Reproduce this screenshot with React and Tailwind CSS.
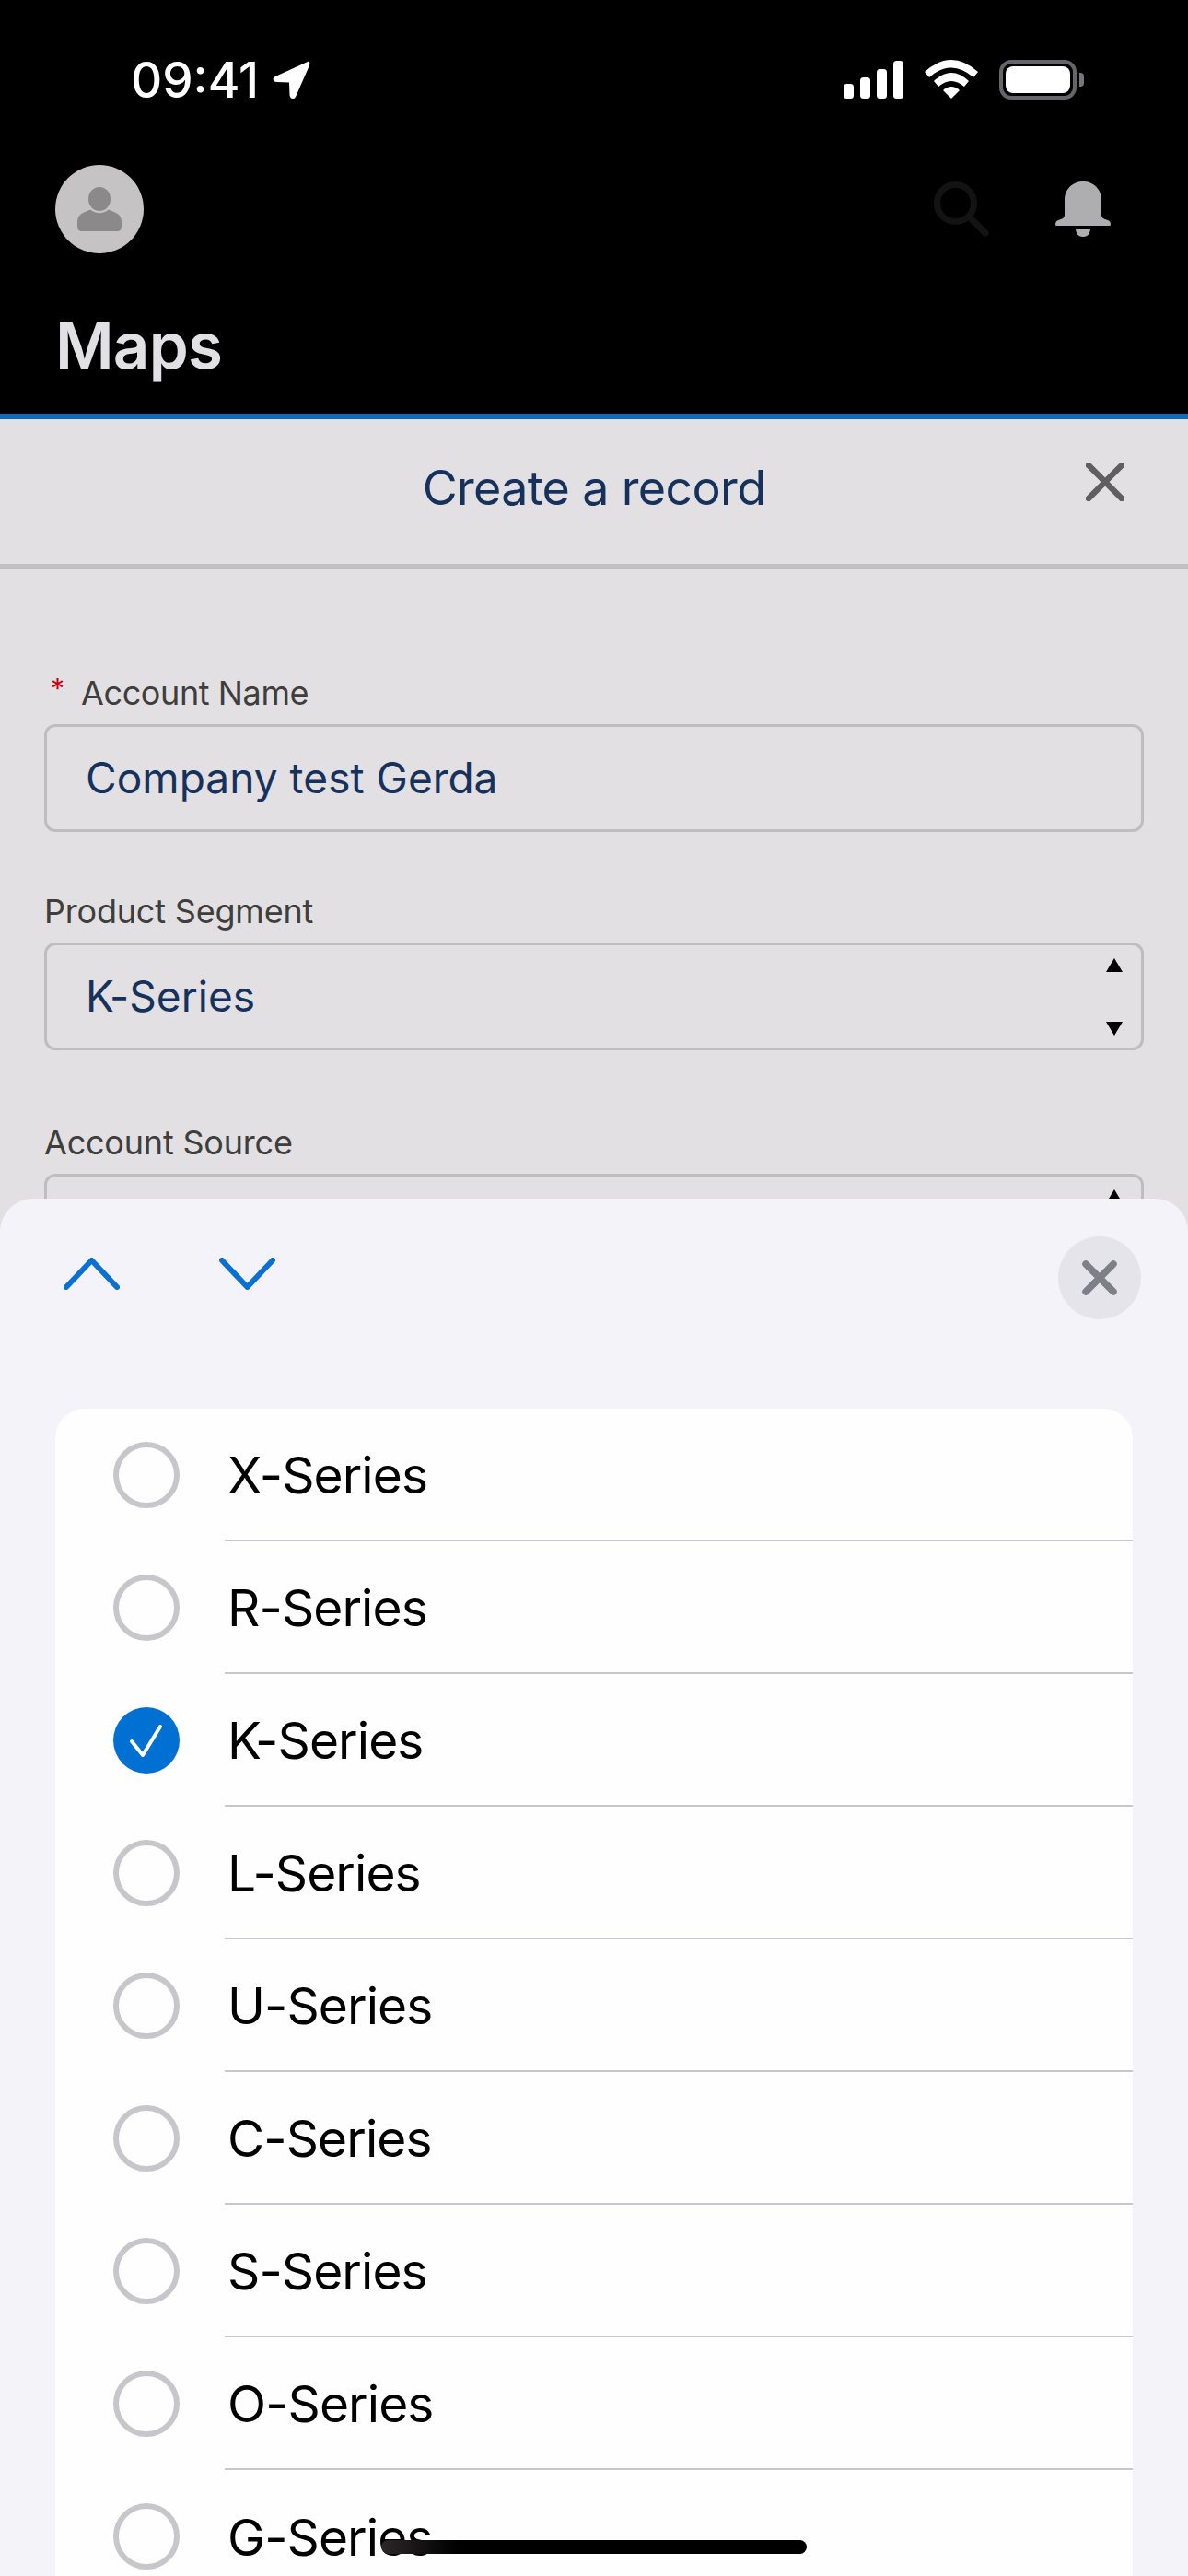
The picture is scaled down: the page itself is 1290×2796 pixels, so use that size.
const series = ['X-Series', 'R-Series', 'K-Series', 'L-Series', 'U-Series', 'C-Series', 'S-Series', 'O-Series', 'G-Series']

/* ─────────────── Status bar ─────────────── */

function StatusBar() {
  return (
    <div className="flex h-[112px] items-start justify-between pl-[142px] pr-[113px] pt-[65px]">
      <div className="flex items-center gap-[14px]">
        <span className="text-[53px] leading-[44px] font-medium tracking-[0px] text-white">09:41</span>
        <svg width="42" height="42" viewBox="0 0 42 42" className="shrink-0">
          <path
            d="M38 1.5 L4 17 Q0 19 2.5 22 Q3.5 23 6 23 L19 23.5 L19.5 37 Q20 41 23 41 Q25.5 41 26.5 38 L41 5 Q42 2 40.5 1 Q39.5 0.5 38 1.5 Z"
            fill="#fff"
          />
        </svg>
      </div>
      <div className="flex items-start">
        <svg width="65" height="41" viewBox="0 0 65 41" className="mt-[1px] shrink-0" fill="#fff">
          <rect x="0" y="25" width="11" height="16" rx="3.5" />
          <rect x="18" y="18" width="11" height="23" rx="3.5" />
          <rect x="36" y="9" width="11" height="32" rx="3.5" />
          <rect x="54" y="0" width="11" height="41" rx="3.5" />
        </svg>
        <svg width="58" height="42" viewBox="0 0 58 42" className="ml-[23px] shrink-0" fill="#fff">
          <path d="M0 13 Q29 -13 58 13 L53 19 Q29 -2 5 19 Z" />
          <path d="M10 23 Q29 5 48 23 L43 29 Q29 17 15 29 Z" />
          <path d="M20 33 Q29 25 38 33 L29 42 Z" />
        </svg>
        <div className="ml-[23px] flex items-center">
          <div className="flex h-[43px] w-[84px] items-center justify-center rounded-[13px] border-[4px] border-[#666567]">
            <div className="h-[29px] w-[70px] rounded-[8px] bg-white" />
          </div>
          <div className="ml-[3px] h-[15px] w-[5px] rounded-r-[4px] bg-[#777678]" />
        </div>
      </div>
    </div>
  )
}

/* ─────────────── App header ─────────────── */

function Header() {
  return (
    <header className="h-[455px] border-b-[6px] border-[#0f6cbd] bg-black">
      <StatusBar />
      <div className="flex h-[96px] items-center justify-between pl-[60px] pr-[84px] mt-[67px]">
        <div className="flex h-[96px] w-[96px] items-center justify-center rounded-full bg-[#c5c3c4]">
          <svg width="48" height="48" viewBox="0 0 48 48" fill="#8b898a">
            <ellipse cx="24" cy="13" rx="12" ry="13" />
            <path d="M14 24.5 Q24 32 34 24.5 L42 28 Q48 31 48 38 L48 43 Q48 48 43 48 L5 48 Q0 48 0 43 L0 38 Q0 31 6 28 Z" />
          </svg>
        </div>
        <div className="flex items-center gap-[72px]">
          <svg width="60" height="60" viewBox="0 0 60 60" fill="none" stroke="#131314" strokeWidth="7">
            <circle cx="23.5" cy="23.5" r="20" />
            <path d="M38 38 L56 56" strokeLinecap="round" />
          </svg>
          <svg width="60" height="60" viewBox="0 0 60 60" fill="#aeaeb0">
            <path d="M30 0 C41 0 50 8 50 20 L50 36 Q50 40 54 41 L57 42 Q60 43 60 47 Q60 48 58 48 L2 48 Q0 48 0 47 Q0 43 3 42 L6 41 Q10 40 10 36 L10 20 C10 8 19 0 30 0 Z" />
            <path d="M22 52 L38 52 Q37 60 30 60 Q23 60 22 52 Z" />
          </svg>
        </div>
      </div>
      <h1 className="mt-[59px] pl-[60px] text-[69px] leading-[82px] font-semibold tracking-[-0.8px] text-[#e1e0e3]">Maps</h1>
    </header>
  )
}

/* ─────────────── Form behind the sheet ─────────────── */

function Field({ label, required, value, select }) {
  return (
    <div>
      <div className="flex h-[46px] items-start">
        {required && <span className="ml-[7px] mr-[18px] text-[30px] leading-[30px] text-[#c4000f]">*</span>}
        <span className={`text-[36px] leading-[40px] text-[#3e3e3c] ${required ? 'tracking-[-0.4px]' : 'tracking-[-0.2px]'}`}>{label}</span>
      </div>
      <div className="mt-[8px] flex h-[117px] items-center justify-between rounded-[12px] border-[3px] border-[#bfbdbf] pl-[42px] pr-[20px]">
        <span className="text-[46px] tracking-[0.05px] text-[#16325c]">{value}</span>
        {select && (
          <div className="flex h-[84px] flex-col items-center justify-between">
            <svg width="18" height="15" viewBox="0 0 18 15"><path d="M9 0 L18 15 L0 15 Z" fill="#000" /></svg>
            <svg width="18" height="15" viewBox="0 0 18 15"><path d="M0 0 L18 0 L9 15 Z" fill="#000" /></svg>
          </div>
        )}
      </div>
    </div>
  )
}

function RecordForm() {
  return (
    <div>
      <div className="grid h-[163px] grid-cols-[1fr_auto_1fr] items-center border-b-[6px] border-[#c2c0c2] pb-[8px]">
        <div />
        <h2 className="text-[52px] leading-[60px] tracking-[-0.65px] text-[#16325c]">Create a record</h2>
        <div className="flex justify-end pb-[14px] pr-[69px]">
          <svg width="42" height="42" viewBox="0 0 42 42" stroke="#605e5f" strokeWidth="6.5" strokeLinecap="round">
            <path d="M3 3 L39 39 M39 3 L3 39" />
          </svg>
        </div>
      </div>
      <div className="flex flex-col px-[48px] pt-[114px]">
        <div className="mb-[66px]">
          <Field label="Account Name" required value="Company test Gerda" />
        </div>
        <div className="mb-[80px]">
          <Field label="Product Segment" value="K-Series" select />
        </div>
        <Field label="Account Source" value="" select />
      </div>
    </div>
  )
}

/* ─────────────── Picker sheet ─────────────── */

function OptionRow({ name, checked, last }) {
  return (
    <div className="flex h-[144px] items-center pl-[63px]">
      {checked ? (
        <div className="flex h-[72px] w-[72px] shrink-0 items-center justify-center rounded-full bg-[#0070d2]">
          <svg width="36" height="36" viewBox="0 0 36 36" fill="none" stroke="#fff" strokeWidth="4" strokeLinecap="round" strokeLinejoin="round">
            <path d="M2 19 L14 34 L33 3" />
          </svg>
        </div>
      ) : (
        <div className="h-[72px] w-[72px] shrink-0 rounded-full border-[6px] border-[#c7c7cb]" />
      )}
      <div className={`ml-[49px] flex h-full flex-1 items-center pl-[3px] pt-[2px] ${last ? '' : 'border-b-2 border-[#c8c8cc]'}`}>
        <span className="text-[55px] tracking-[-0.9px] text-black">{name}</span>
      </div>
    </div>
  )
}

function PickerSheet() {
  return (
    <div className="absolute inset-x-0 bottom-0 top-[1301px] overflow-hidden rounded-t-[36px] bg-[#f3f3f9]">
      <div className="flex items-start justify-between pl-[69px] pr-[51px] pt-[41px]">
        <div className="flex gap-[108px] pt-[23px]">
          <svg width="61" height="35" viewBox="0 0 61 35" fill="none" stroke="#0a70d2" strokeWidth="6" strokeLinecap="round" strokeLinejoin="round">
            <path d="M3 32 L30.5 3 L58 32" />
          </svg>
          <svg width="61" height="35" viewBox="0 0 61 35" fill="none" stroke="#0a70d2" strokeWidth="6" strokeLinecap="round" strokeLinejoin="round">
            <path d="M3 3 L30.5 32 L58 3" />
          </svg>
        </div>
        <div className="flex h-[90px] w-[90px] items-center justify-center rounded-full bg-[#e4e4ea]">
          <svg width="38" height="38" viewBox="0 0 38 38" stroke="#7f7f87" strokeWidth="7.5" strokeLinecap="round">
            <path d="M4 4 L34 34 M34 4 L4 34" />
          </svg>
        </div>
      </div>
      <div className="mx-[60px] mt-[97px] h-[1400px] overflow-hidden rounded-t-[32px] bg-[#fefefe]">
        {series.map((name, i) => (
          <OptionRow key={name} name={name} checked={name === 'K-Series'} last={i === series.length - 1} />
        ))}
      </div>
    </div>
  )
}

export default function App() {
  return (
    <div className="relative h-[2796px] w-[1290px] overflow-hidden bg-[#e2e0e3] font-['Inter',sans-serif]">
      <Header />
      <RecordForm />
      <PickerSheet />
      {/* home indicator sits over the list */}
      <div className="absolute left-[414px] top-[2757px] h-[15px] w-[462px] rounded-full bg-[linear-gradient(90deg,#2a2729_0%,#000_18%,#000_100%)]" />
    </div>
  )
}
